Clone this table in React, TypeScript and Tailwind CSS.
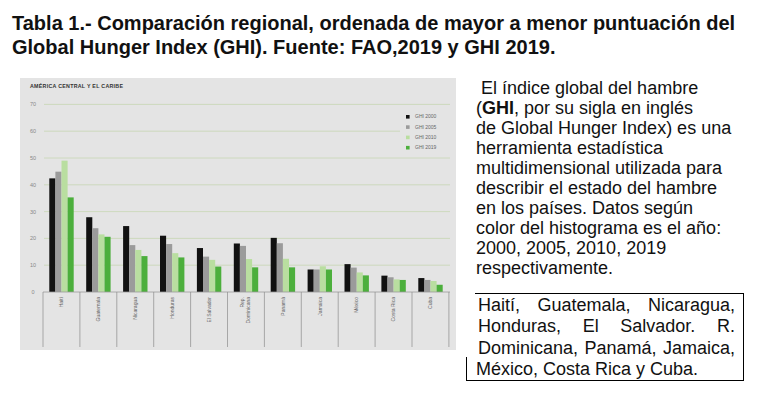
const SERIES = ["#111111", "#9b9b9b", "#b9dea0", "#4caf3c"];
const LEGEND = ["GHI 2000", "GHI 2005", "GHI 2010", "GHI 2019"];

const COUNTRIES: { name: string[]; values: number[] }[] = [
  { name: ["Haití"], values: [42.4, 44.9, 49, 35.3] },
  { name: ["Guatemala"], values: [27.9, 23.8, 21.5, 20.6] },
  { name: ["Nicaragua"], values: [24.6, 17.5, 15.7, 13.4] },
  { name: ["Honduras"], values: [21, 17.9, 14.5, 12.9] },
  { name: ["El Salvador"], values: [16.4, 13.2, 12, 9.5] },
  { name: ["Rep.", "Dominicana"], values: [18.1, 17.2, 12.3, 9.2] },
  { name: ["Panamá"], values: [20.2, 18.2, 12.4, 9.2] },
  { name: ["Jamaica"], values: [8.4, 8.4, 9.6, 8.4] },
  { name: ["México"], values: [10.4, 9.1, 7.3, 6.2] },
  { name: ["Costa Rica"], values: [6.1, 5.5, 4.7, 4.5] },
  { name: ["Cuba"], values: [5.2, 4.5, 4.1, 2.7] },
];

const FONT = "Liberation Sans, Arial, sans-serif";
const BG = "#e4e4e4";
const yOf = (v: number) => 214 - 2.68 * v;
const sepX = (i: number) => 23 + i * 36.9;

function HungerChart() {
  return (
    <div className="w-[436px] h-[272px] shrink-0 bg-[#e4e4e4]">
      <svg width="436" height="272" viewBox="0 0 436 272">
        <text x="10" y="9.5" fontFamily={FONT} fontSize="5.3" fontWeight="bold" fill="#333" textLength="93">
          AMÉRICA CENTRAL Y EL CARIBE
        </text>

        {[10, 20, 30, 40, 50, 60, 70].map((v) => (
          <line key={v} x1="24" x2="430" y1={yOf(v)} y2={yOf(v)} stroke="#c6d6b4" strokeWidth="0.8" />
        ))}
        {[0, 10, 20, 30, 40, 50, 60, 70].map((v) => (
          <text key={v} x="13" y={yOf(v) + 2} textAnchor="middle" fontFamily={FONT} fontSize="5.5" fill="#888">
            {v}
          </text>
        ))}

        {/* legend sits over the 60 gridline */}
        <rect x="380" y="34" width="52" height="40" fill={BG} />
        {LEGEND.map((label, k) => (
          <g key={label}>
            <rect x="386" y={37 + k * 10.3} width="3.6" height="3.6" fill={SERIES[k]} />
            <text x="395" y={40.4 + k * 10.3} fontFamily={FONT} fontSize="5" fill="#666">
              {label}
            </text>
          </g>
        ))}

        {COUNTRIES.map((c, g) =>
          c.values.map((v, k) => (
            <rect
              key={`${g}-${k}`}
              x={sepX(g) + 6.3 + k * 6.1}
              y={yOf(v)}
              width="6.1"
              height={214 - yOf(v)}
              fill={SERIES[k]}
            />
          ))
        )}

        <line x1="23" x2="430" y1="214" y2="214" stroke="#9a9a9a" strokeWidth="0.8" />
        {Array.from({ length: 12 }).map((_, i) => (
          <line key={i} x1={sepX(i)} x2={sepX(i)} y1="214" y2="269" stroke="#8c8c8c" strokeWidth="0.7" />
        ))}

        {COUNTRIES.map((c, g) => {
          const cx = sepX(g) + 18.45;
          return c.name.map((line, j) => {
            const x = cx + (c.name.length === 1 ? 1.8 : j === 0 ? -1.5 : 4.5);
            return (
              <text
                key={`${g}-${j}`}
                x={x}
                y="219"
                transform={`rotate(-90 ${x} 219)`}
                textAnchor="end"
                fontFamily={FONT}
                fontSize="5"
                fill="#666"
              >
                {line}
              </text>
            );
          });
        })}
      </svg>
    </div>
  );
}

const JUSTIFIED = ["Haití, Guatemala, Nicaragua,", "Honduras, El Salvador. R.", "Dominicana, Panamá, Jamaica,"];

export default function App() {
  return (
    <div className="w-[772px] h-[414px] bg-white text-[#111] font-['Liberation_Sans',Arial,sans-serif] overflow-hidden">
      <h1 className="pl-[12px] pt-[12px] text-[20px] leading-[23.5px] font-bold whitespace-nowrap">
        Tabla 1.- Comparación regional, ordenada de mayor a menor puntuación del
        <br />
        Global Hunger Index (GHI). Fuente: FAO,2019 y GHI 2019.
      </h1>

      <div className="flex mt-[19px] pl-[20px]">
        <HungerChart />

        <div className="ml-[10px] flex flex-col">
          <p className="pl-[10px] text-[18px] leading-[20px] whitespace-nowrap">
            {"\u00a0"}El índice global del hambre
            <br />
            (<b>GHI</b>, por su sigla en inglés
            <br />
            de Global Hunger Index) es una
            <br />
            herramienta estadística
            <br />
            multidimensional utilizada para
            <br />
            describir el estado del hambre
            <br />
            en los países. Datos según
            <br />
            color del histograma es el año:
            <br />
            2000, 2005, 2010, 2019
            <br />
            respectivamente.
          </p>

          <div className="relative mt-[15px] w-[278px] border-r border-b border-black">
            <div className="ml-[9px] border-t border-black" />
            <div className="absolute left-0 bottom-0 w-px h-[23px] bg-black" />
            <div className="pl-[12px] pr-[8px] pt-[1px] text-[18px] leading-[21.3px]">
              {JUSTIFIED.map((line) => (
                <div key={line} className="text-justify [text-align-last:justify]">
                  {line}
                </div>
              ))}
              <div className="-ml-[2px]">México, Costa Rica y Cuba.</div>
            </div>
          </div>
        </div>
      </div>
    </div>
  );
}
